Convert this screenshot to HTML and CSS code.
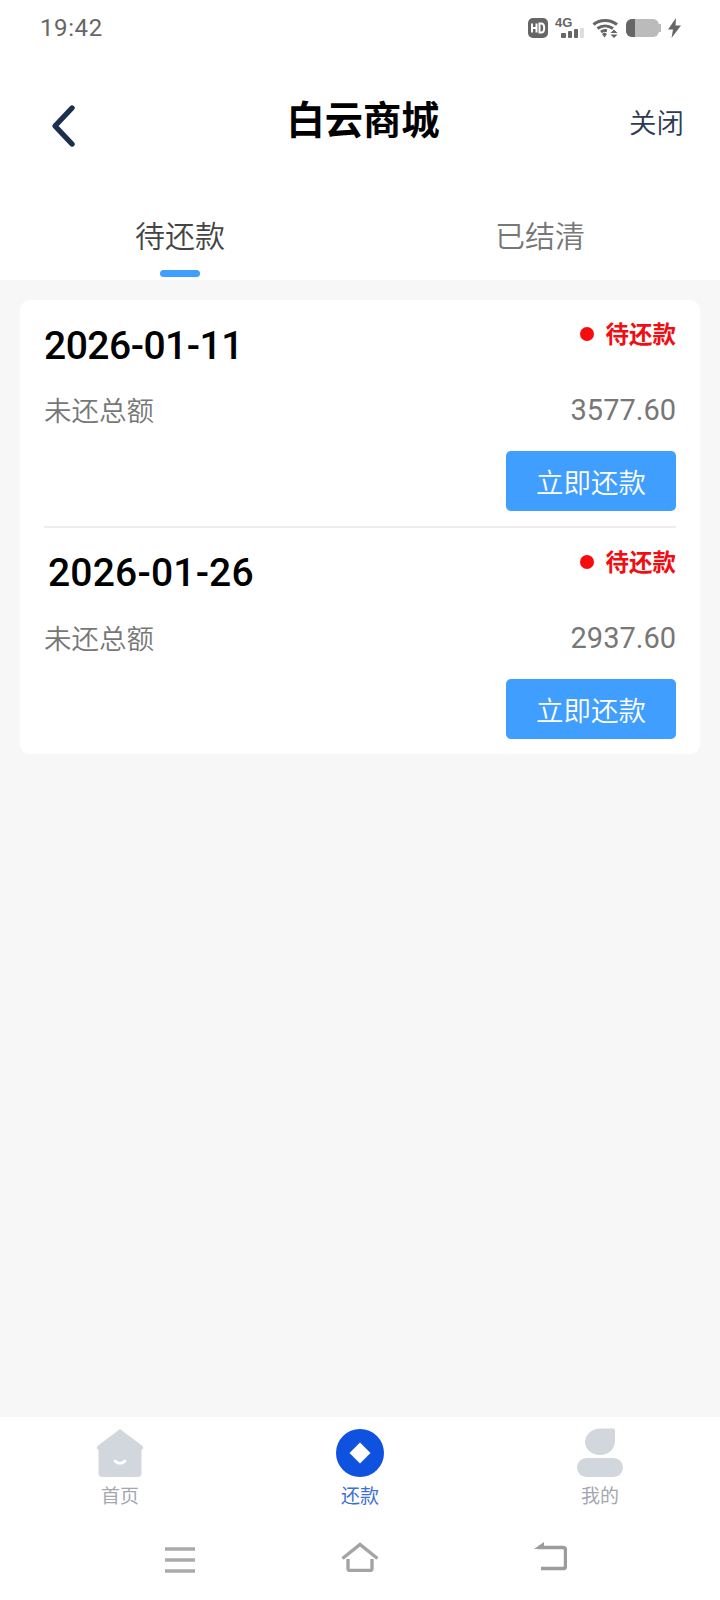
FILE: index.html
```html
<!DOCTYPE html>
<html lang="zh-CN">
<head>
<meta charset="utf-8">
<title>白云商城</title>
<link rel="stylesheet" href="styles.css">
</head>
<body>
<div class="page">
  <div class="status">
    <span class="time">19:42</span>
    <div class="status-icons">
      <svg width="20" height="20" viewBox="0 0 20 20"><rect width="20" height="20" rx="5" fill="#666"/><path d="M4 5.500v9M8.500 5.500v9M4 10h4.500" stroke="#fff" stroke-width="2" fill="none"/><path d="M11.500 5.500v9h1.700c2 0 3-1.800 3-4.500s-1-4.500-3-4.500z" stroke="#fff" stroke-width="2" fill="none"/></svg>
      <div class="net">
        <span class="net-label">4G</span>
        <svg width="24" height="10" viewBox="0 0 24 10"><rect x="0" y="5" width="5" height="5" rx="1" fill="#666"/><rect x="7" y="3" width="4" height="7" rx="1" fill="#666"/><rect x="13" y="1" width="4" height="9" rx="1" fill="#666"/><rect x="19" y="0" width="4" height="10" rx="1" fill="#ddd"/></svg>
      </div>
      <svg width="27" height="20" viewBox="0 0 27 20"><path d="M1.500 6.500C8 1 18 1 25 6.500M5.500 10.500C10 7 16 7 21 10.500M9 14c2-1.500 3.500-1.700 6-1.200" stroke="#666" stroke-width="3" fill="none"/><path d="M10 16l2.500-1.500 2.500 1.500-2.500 3.500z" fill="#666"/><path d="M18.500 15l3.500-3.500 3.500 3.500zM18.500 16.500h7L22 20z" fill="#666"/></svg>
      <div class="battery"><div class="battery-body"><span class="battery-fill"></span></div><span class="battery-nub"></span></div>
      <svg width="13" height="20" viewBox="0 0 13 20"><path d="M8 0L0 11.500h5L3.500 20 13 7.500H7.500z" fill="#666"/></svg>
    </div>
  </div>

  <header class="nav">
    <svg class="back" width="26" height="44" viewBox="0 0 26 44"><path d="M22 4L5 22l17 18" stroke="#1c2f4e" stroke-width="5.400" stroke-linecap="round" stroke-linejoin="round" fill="none"/></svg>
    <h1 class="title">白云商城</h1>
    <span class="close">关闭</span>
  </header>

  <nav class="tabs">
    <div class="tab tab-active">待还款<span class="tab-bar"></span></div>
    <div class="tab">已结清</div>
  </nav>

  <main class="content">
    <section class="card">
      <article class="bill">
        <div class="bill-top">
          <span class="date">2026-01-11</span>
          <span class="state"><i class="dot"></i>待还款</span>
        </div>
        <div class="bill-row"><span>未还总额</span><span class="amount">3577.60</span></div>
        <div class="bill-action"><span class="pay">立即还款</span></div>
      </article>
      <article class="bill">
        <div class="bill-top">
          <span class="date date-shift">2026-01-26</span>
          <span class="state"><i class="dot"></i>待还款</span>
        </div>
        <div class="bill-row"><span>未还总额</span><span class="amount">2937.60</span></div>
        <div class="bill-action"><span class="pay">立即还款</span></div>
      </article>
    </section>
  </main>

  <footer class="tabbar">
    <div class="item">
      <svg width="48" height="50" viewBox="0 0 48 50"><path d="M24 1L46.500 18c1.500 1.500.5 3.500-1 3.500H45.500V45c0 2.500-1.500 4-3.500 4H6c-2 0-3.500-1.500-3.500-4V21.500H2.500c-1.500 0-2.500-2-1-3.500z" fill="#d2d7de"/><path d="M19 33c3 3 7 3 10 0" stroke="#fff" stroke-width="2.800" stroke-linecap="round" fill="none"/></svg>
      <span class="item-label">首页</span>
    </div>
    <div class="item item-on">
      <svg width="48" height="50" viewBox="0 0 48 50"><circle cx="24" cy="25" r="24" fill="#0f52e0"/><path d="M24 14.500L34.500 25 24 35.500 13.500 25z" fill="#fff"/></svg>
      <span class="item-label">还款</span>
    </div>
    <div class="item">
      <svg width="48" height="50" viewBox="0 0 48 50"><path d="M24 .5h13c1.500 0 2 1 2 2V13c0 8-6.500 14-15 14S9 21 9 14 15.500.5 24 .5z" fill="#d2d7de"/><rect x="1" y="30" width="46" height="19" rx="9.500" fill="#d2d7de"/></svg>
      <span class="item-label">我的</span>
    </div>
  </footer>

  <div class="sysnav">
    <svg class="sys-menu" width="30" height="26" viewBox="0 0 30 26"><path d="M0 2h30M0 13h30M0 24h30" stroke="#aaa" stroke-width="3.600" fill="none"/></svg>
    <svg width="38" height="30" viewBox="0 0 38 30"><path d="M1.500 16.500L19 2.500l17.500 14M7 17v9.500c0 1.500 1 2 2 2h20c1 0 2-.5 2-2V17" stroke="#a4a4a4" stroke-width="3.400" fill="none"/></svg>
    <svg class="sys-back" width="33" height="29" viewBox="0 0 33 29"><path d="M4 5.500h25c1.500 0 2.500 1 2.500 2.500v16c0 1.500-1 2.500-2.500 2.500H7" stroke="#9c9c9c" stroke-width="3.400" fill="none"/><path d="M0 7L10 0v7z" fill="#9c9c9c"/></svg>
  </div>
</div>
</body>
</html>
```

FILE: styles.css
```css
* { box-sizing: border-box; margin: 0; padding: 0; }
html, body { background: #fff; }
body { font-family: "Noto Sans CJK SC", Roboto, sans-serif; }
.page { width: 720px; height: 1600px; display: flex; flex-direction: column; background: #f7f7f7; overflow: hidden; }

.status { height: 56px; flex: none; background: #fff; display: flex; align-items: center; justify-content: space-between; padding: 0 39px 0 40px; }
.time { font: 400 24px/1 Roboto, sans-serif; color: #666; letter-spacing: .6px; }
.status-icons { display: flex; align-items: center; gap: 7px; }
.net { position: relative; width: 30px; height: 20px; display: flex; flex-direction: column; align-items: flex-end; justify-content: flex-end; }
.net svg { display: block; }
.net-label { position: absolute; left: 0; top: -1px; font: 700 13px/12px "Liberation Sans", sans-serif; color: #666; }
.battery { display: flex; align-items: center; }
.battery-body { width: 33px; height: 18px; border-radius: 6px; background: #bbb; overflow: hidden; }
.battery-fill { display: block; width: 9px; height: 100%; background: #666; }
.battery-nub { width: 2px; height: 8px; background: #bbb; }

.nav { height: 132px; flex: none; background: #fff; display: flex; align-items: center; justify-content: space-between; padding: 0 36px 0 50px; position: relative; }
.back { flex: none; margin-top: 8px; }
.title { font: 700 38.300px/1 "Noto Sans CJK SC", sans-serif; color: #000; position: absolute; left: 0; right: 0; padding-left: 6px; text-align: center; margin-top: -8px; }
.close { font: 350 27.500px/1 "Noto Sans CJK SC", sans-serif; color: #2c3a55; }

.tabs { height: 92px; flex: none; background: #fff; display: flex; }
.tab { flex: 1; display: flex; justify-content: center; padding-top: 28px; font: 350 30px/1.2 "Noto Sans CJK SC", sans-serif; color: #777; position: relative; }
.tab-active { color: #444; }
.tab-bar { position: absolute; left: 50%; bottom: 3px; width: 40px; height: 7px; margin-left: -20px; border-radius: 4px; background: #409eff; }

.content { flex: 1; padding: 20px 20px 0; min-height: 0; }
.card { background: #fff; border-radius: 10px; padding: 0 24px; }
.bill { height: 228px; display: flex; flex-direction: column; border-bottom: 2px solid #ededed; }
.bill:last-child { border-bottom: 0; height: 226px; }
.bill-top { height: 90px; display: flex; justify-content: space-between; align-items: flex-start; }
.date { font: 500 39px/1 Roboto, sans-serif; color: #000; margin-top: 27px; letter-spacing: -.5px; }
.date-shift { margin-left: 4px; margin-top: 26px; letter-spacing: .2px; }
.state { display: flex; align-items: center; gap: 12px; font: 700 23.500px/1 "Noto Sans CJK SC", sans-serif; color: #f20d12; margin-top: 22px; }
.dot { width: 14px; height: 14px; border-radius: 50%; background: #f80a0f; }
.bill-row { display: flex; justify-content: space-between; align-items: center; height: 40px; font: 350 27.500px/1 "Noto Sans CJK SC", sans-serif; color: #777; }
.amount { font: 400 29px/1 Roboto, sans-serif; color: #777; }
.bill-action { display: flex; justify-content: flex-end; margin-top: 20.500px; }
.pay { width: 170px; height: 60px; background: #409eff; border-radius: 5px; color: #fff; font: 350 27.500px/60px "Noto Sans CJK SC", sans-serif; text-align: center; }

.tabbar { flex: none; height: 118px; background: #fff; display: flex; padding-top: 11px; }
.item { flex: 1; display: flex; flex-direction: column; align-items: center; }
.item svg { display: block; }
.item-label { font: 400 19px/1 "Noto Sans CJK SC", sans-serif; color: #a3a8b0; margin-top: 7px; }
.item-on .item-label { color: #3d6fd3; }

.sysnav { flex: none; height: 65px; background: #fff; display: flex; align-items: flex-start; padding: 7px 0 0 165px; gap: 146px; }
.sys-menu { margin-top: 5px; }
.sys-back { margin-left: 9px; }
```
